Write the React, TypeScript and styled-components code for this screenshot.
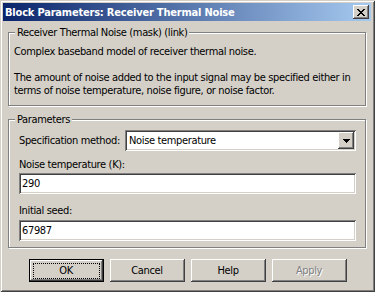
import styled, { createGlobalStyle } from "styled-components";

const GlobalStyle = createGlobalStyle`
  html, body {
    margin: 0;
    padding: 0;
    background: #d4d0c8;
  }
  body {
    font-family: "DejaVu Sans Condensed", "Liberation Sans", sans-serif;
    font-size: 11px;
    letter-spacing: -0.35px;
    color: #000;
  }
`;

const raised = `
  box-shadow: inset -1px -1px #404040, inset 1px 1px #fff,
    inset -2px -2px #808080, inset 2px 2px #d4d0c8;
`;

const sunken = `
  box-shadow: inset 1px 1px #808080, inset -1px -1px #fff,
    inset 2px 2px #404040, inset -2px -2px #d4d0c8;
`;

const Window = styled.div`
  width: 375px;
  height: 292px;
  box-sizing: border-box;
  padding: 3px 4px 4px 3px;
  background: #d4d0c8;
  box-shadow: inset 1px 1px #d4d0c8, inset -1px -1px #404040,
    inset 2px 2px #fff, inset -2px -2px #808080;
  display: flex;
  flex-direction: column;
`;

const TitleBar = styled.div`
  height: 18px;
  display: flex;
  align-items: center;
  padding: 0 2px 0 2px;
  background: linear-gradient(to right, #0a246a, #a6caf0);
`;

const Title = styled.span`
  color: #fff;
  font-weight: bold;
  font-size: 11px;
  letter-spacing: -0.2px;
  line-height: 13px;
  white-space: nowrap;
`;

const CloseButton = styled.div`
  margin-left: auto;
  width: 16px;
  height: 14px;
  background: #d4d0c8;
  display: flex;
  align-items: center;
  justify-content: center;
  ${raised}
`;

const Body = styled.div`
  flex: 1;
  display: flex;
  flex-direction: column;
  padding: 0 5px;
`;

const Group = styled.div<{ $top: number }>`
  position: relative;
  margin-top: ${(p) => p.$top}px;
  border: 1px solid #808080;
  box-shadow: inset 1px 1px #fff, 1px 1px #fff;
`;

const Caption = styled.span`
  position: absolute;
  top: -7px;
  left: 6px;
  padding: 0 2px;
  line-height: 13px;
  background: #d4d0c8;
  white-space: nowrap;
`;

const Description = styled.div`
  padding: 12px 8px 8px 5px;
`;

const Para = styled.p<{ $gap?: number }>`
  margin: ${(p) => p.$gap ?? 0}px 0 0 0;
  line-height: 13px;
  white-space: nowrap;
`;

const Params = styled.div`
  display: flex;
  flex-direction: column;
  padding: 10px 9px 6px 10px;
`;

const Row = styled.div`
  display: flex;
  align-items: center;
`;

const Label = styled.div<{ $gap?: number }>`
  flex: 1;
  margin-top: ${(p) => p.$gap ?? 0}px;
  line-height: 13px;
  white-space: nowrap;
`;

const Select = styled.div`
  width: 231px;
  height: 21px;
  box-sizing: border-box;
  background: #fff;
  display: flex;
  align-items: center;
  padding: 2px 2px 2px 4px;
  ${sunken}
`;

const SelectText = styled.span`
  flex: 1;
  line-height: 13px;
`;

const DropButton = styled.div`
  width: 16px;
  height: 17px;
  background: #d4d0c8;
  display: flex;
  align-items: center;
  justify-content: center;
  ${raised}
`;

const TextField = styled.input<{ $gap?: number }>`
  margin: ${(p) => p.$gap ?? 0}px 0 0 0;
  height: 21px;
  box-sizing: border-box;
  border: none;
  outline: none;
  padding: 0 0 0 3px;
  font: inherit;
  font-size: 11px;
  letter-spacing: -0.35px;
  color: #000;
  background: #fff;
  ${sunken}
`;

const ButtonRow = styled.div`
  display: flex;
  justify-content: center;
  gap: 6px;
  margin-top: 11px;
  padding-left: 1px;
`;

const Button = styled.div<{ $default?: boolean; $disabled?: boolean }>`
  width: 75px;
  height: 23px;
  box-sizing: border-box;
  display: flex;
  align-items: center;
  justify-content: center;
  background: #d4d0c8;
  line-height: 13px;
  color: ${(p) => (p.$disabled ? "#808080" : "#000")};
  text-shadow: ${(p) => (p.$disabled ? "1px 1px #fff" : "none")};
  ${(p) =>
    p.$default
      ? `
    border: 1px solid #000;
    box-shadow: inset -1px -1px #404040, inset 1px 1px #fff,
      inset -2px -2px #808080;
  `
      : raised}
`;

const FocusRing = styled.span`
  width: 67px;
  height: 16px;
  box-sizing: border-box;
  border: 1px dotted #000;
  display: flex;
  align-items: center;
  justify-content: center;
`;

const CloseGlyph = () => (
  <svg width="8" height="7" viewBox="0 0 8 7" shapeRendering="crispEdges">
    <path
      d="M0 0h2v1H0zM6 0h2v1H6zM1 1h2v1H1zM5 1h2v1H5zM2 2h4v1H2zM3 3h2v1H3zM2 4h4v1H2zM1 5h2v1H1zM5 5h2v1H5zM0 6h2v1H0zM6 6h2v1H6z"
      fill="#000"
    />
  </svg>
);

const DownArrow = () => (
  <svg width="7" height="4" viewBox="0 0 7 4" shapeRendering="crispEdges">
    <path d="M0 0h7v1H0zM1 1h5v1H1zM2 2h3v1H2zM3 3h1v1H3z" fill="#000" />
  </svg>
);

export default function App() {
  return (
    <>
      <GlobalStyle />
      <Window>
        <TitleBar>
          <Title>Block Parameters: Receiver Thermal Noise</Title>
          <CloseButton>
            <CloseGlyph />
          </CloseButton>
        </TitleBar>
        <Body>
          <Group $top={11}>
            <Caption>Receiver Thermal Noise (mask) (link)</Caption>
            <Description>
              <Para>Complex baseband model of receiver thermal noise.</Para>
              <Para $gap={13}>
                The amount of noise added to the input signal may be specified either in
                <br />
                terms of noise temperature, noise figure, or noise factor.
              </Para>
            </Description>
          </Group>
          <Group $top={13}>
            <Caption>Parameters</Caption>
            <Params>
              <Row>
                <Label>Specification method:</Label>
                <Select>
                  <SelectText>Noise temperature</SelectText>
                  <DropButton>
                    <DownArrow />
                  </DropButton>
                </Select>
              </Row>
              <Label $gap={7}>Noise temperature (K):</Label>
              <TextField $gap={2} defaultValue="290" readOnly />
              <Label $gap={10}>Initial seed:</Label>
              <TextField $gap={3} defaultValue="67987" readOnly />
            </Params>
          </Group>
          <ButtonRow>
            <Button $default>
              <FocusRing>OK</FocusRing>
            </Button>
            <Button>Cancel</Button>
            <Button>Help</Button>
            <Button $disabled>Apply</Button>
          </ButtonRow>
        </Body>
      </Window>
    </>
  );
}
